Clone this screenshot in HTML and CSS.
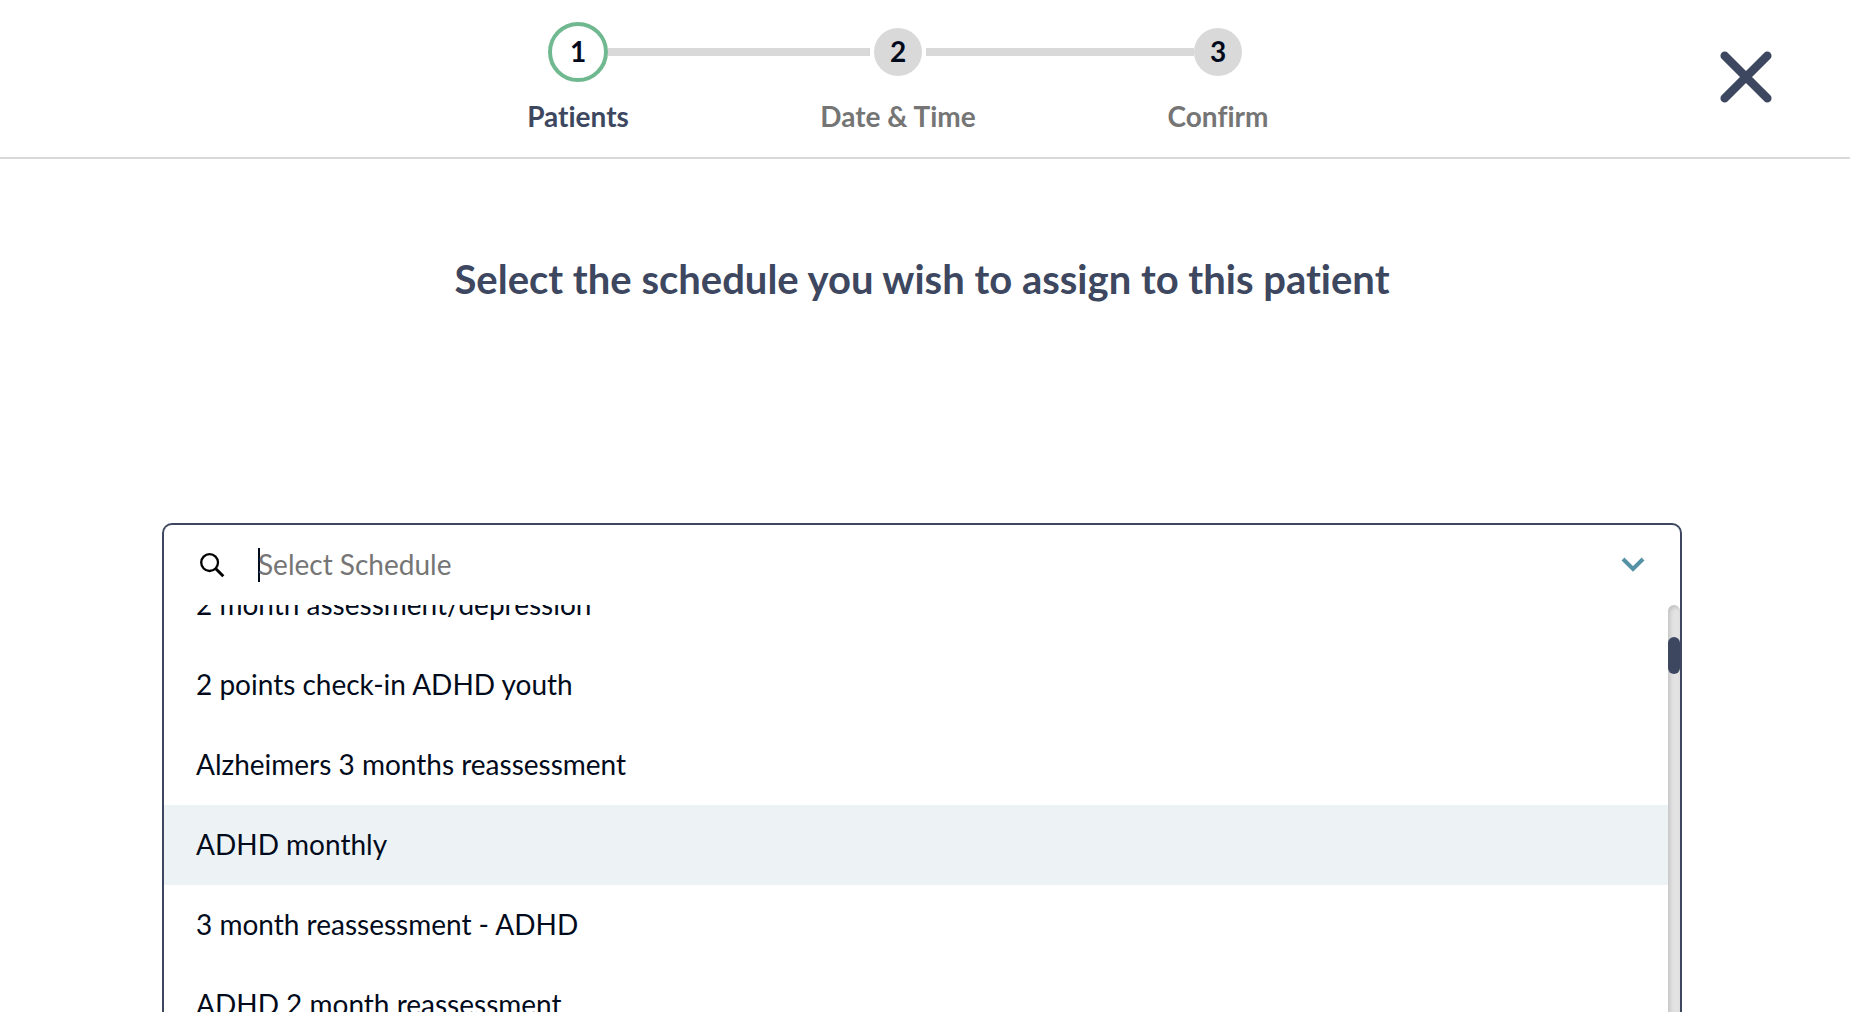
FILE: index.html
```
<!DOCTYPE html>
<html lang="en">
<head>
    <meta charset="UTF-8">
    <meta name="viewport" content="width=device-width, initial-scale=1.0">
    <title>Assign Schedule</title>
    <link rel="stylesheet" href="styles.css">
</head>
<body>
    <!-- Header with progress steps -->
    <header>
        <ol class="steps">
            <li class="step active">
                <div class="marker"><span class="circle">1</span></div>
                <span class="label">Patients</span>
            </li>
            <li class="step">
                <div class="marker"><span class="circle">2</span></div>
                <span class="label">Date &amp; Time</span>
            </li>
            <li class="step">
                <div class="marker"><span class="circle">3</span></div>
                <span class="label">Confirm</span>
            </li>
        </ol>
        <button type="button" class="close-btn" aria-label="Close">
            <svg width="52" height="52" viewBox="0 0 52 52">
                <path d="M4.7 4.7L47.3 47.3M47.3 4.7L4.7 47.3" fill="none" stroke="#3d4760" stroke-width="8.5" stroke-linecap="round"/>
            </svg>
        </button>
    </header>

    <!-- Schedule picker -->
    <main>
        <h1>Select the schedule you wish to assign to this patient</h1>
        <div class="select-box">
            <div class="search-row">
                <svg class="search-icon" width="26" height="26" viewBox="0 0 26 26">
                    <circle cx="10.6" cy="10.6" r="8.4" fill="none" stroke="#000" stroke-width="2.3"/>
                    <path d="M16.8 16.8L24.3 24.3" stroke="#000" stroke-width="3"/>
                </svg>
                <input type="text" id="schedule" class="search-input" placeholder="Select Schedule" aria-label="Select Schedule" autocomplete="off">
                <button type="button" class="toggle-btn" aria-label="Toggle schedules">
                    <svg width="24" height="16" viewBox="0 0 24 16">
                        <path d="M2 2L12 12L22 2" fill="none" stroke="#5692a6" stroke-width="4"/>
                    </svg>
                </button>
            </div>
            <div class="dropdown">
                <ul class="options" role="listbox" aria-label="Schedules">
                    <li role="option">2 month assessment/depression</li>
                    <li role="option">2 points check-in ADHD youth</li>
                    <li role="option">Alzheimers 3 months reassessment</li>
                    <li role="option" class="highlighted" aria-selected="true">ADHD monthly</li>
                    <li role="option">3 month reassessment - ADHD</li>
                    <li role="option">ADHD 2 month reassessment</li>
                </ul>
                <div class="scroll-track"><div class="scroll-thumb"></div></div>
            </div>
        </div>
    </main>
</body>
</html>
```

FILE: styles.css
```
* {
    box-sizing: border-box;
}
body {
    font-family: Lato, sans-serif;
    font-size: 28px;
    font-variant-ligatures: none;
    color: #020b1c;
    background-color: #fff;
    margin: 0;
    height: 100vh;
    display: flex;
    flex-direction: column;
    overflow: hidden;
}
button {
    background: none;
    border: none;
    padding: 0;
    cursor: pointer;
}
button svg {
    display: block;
}
header {
    display: flex;
    align-items: center;
    padding: 22px 78px 22px 76px;
    border-bottom: 2px solid #d9d9d9;
}
.close-btn {
    padding-bottom: 4px;
}
.steps {
    flex: 1;
    display: flex;
    justify-content: center;
    list-style: none;
    margin: 0;
    padding: 0;
}
.step {
    width: 320px;
    text-align: center;
    color: #757575;
}
.step.active {
    color: #3d4760;
}
.marker {
    display: flex;
    align-items: center;
    height: 60px;
}
/* connecting lines on both sides of each circle */
.marker::before,
.marker::after {
    content: "";
    flex: 1;
    height: 8px;
    background-color: #d9d9d9;
}
.step:first-child .marker::before,
.step:last-child .marker::after {
    background: none;
}
.circle {
    display: flex;
    align-items: center;
    justify-content: center;
    width: 48px;
    height: 48px;
    padding-bottom: 2px;
    border-radius: 50%;
    background-color: #d9d9d9;
    color: #020b1c;
    font-weight: bold;
}
.step:nth-child(2) .circle {
    margin: 0 4px;
}
.active .circle {
    width: 60px;
    height: 60px;
    border: 4px solid #70b990;
    background-color: #fff;
}
.label {
    display: block;
    margin-top: 16px;
    padding-bottom: 1px;
    line-height: 36px;
    font-weight: bold;
}
main {
    flex: 1;
    min-height: 0;
    display: flex;
    flex-direction: column;
    padding: 96px 168px 0 162px;
}
h1 {
    margin: 0 0 220px;
    font-size: 40px;
    line-height: 48px;
    text-align: center;
    color: #3d4760;
}
.select-box {
    flex: 1;
    min-height: 0;
    display: flex;
    flex-direction: column;
    border: 2px solid #3d4760;
    border-bottom: none;
    border-radius: 10px 10px 0 0;
}
.search-row {
    display: flex;
    align-items: center;
    flex-shrink: 0;
    height: 80px;
    padding: 0 35px;
}
.search-input {
    flex: 1;
    height: 48px;
    margin-left: 33px;
    padding: 0 0 2px;
    border: none;
    outline: none;
    font: inherit;
    color: inherit;
    /* text cursor */
    background: linear-gradient(#020b1c, #020b1c) left center / 2px 34px no-repeat;
}
.search-input::placeholder {
    color: #757575;
    opacity: 1;
}
.dropdown {
    flex: 1;
    min-height: 0;
    display: flex;
    overflow: hidden;
}
.options {
    flex: 1;
    list-style: none;
    margin: -40px 0 0;
    padding: 0;
}
.options li {
    padding: 0 32px 2px;
    line-height: 78px;
    cursor: pointer;
}
.options .highlighted {
    background-color: #edf3f5;
}
.scroll-track {
    width: 12px;
    padding-top: 32px;
    border-radius: 6px 6px 0 0;
    background-color: #e3e3e3;
    box-shadow: inset 2px 2px 4px rgba(0, 0, 0, 0.15);
}
.scroll-thumb {
    height: 37px;
    border-radius: 6px;
    background-color: #3d4760;
}
```
